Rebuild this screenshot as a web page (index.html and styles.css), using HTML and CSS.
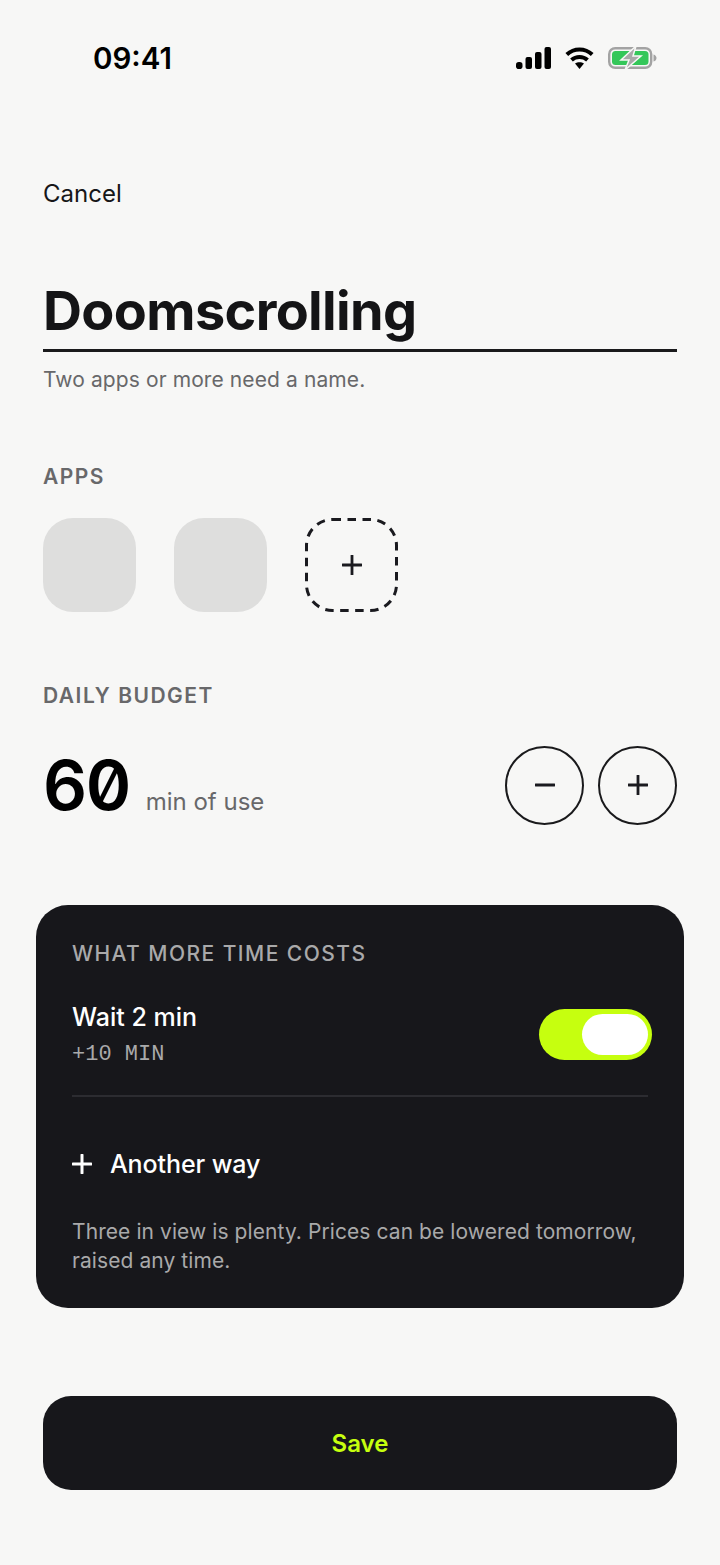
FILE: index.html
```html
<!DOCTYPE html>
<html lang="en">
<head>
<meta charset="utf-8">
<title>Doomscrolling</title>
<link rel="stylesheet" href="styles.css">
</head>
<body>
<div class="screen">
  <header class="status">
    <span class="time">09:41</span>
    <div class="status-icons">
      <svg class="ic-signal" width="35" height="22" viewBox="0 0 35 22"><rect x="0" y="15" width="6.500" height="7" rx="2.800"/><rect x="9.500" y="10" width="6.500" height="12" rx="2"/><rect x="19" y="5" width="6.500" height="17" rx="2"/><rect x="28.500" y="0" width="6.500" height="22" rx="2"/></svg>
      <svg class="ic-wifi" width="29" height="22" viewBox="0 0 28 22"><path d="M1.300 7.500C8.500 .8 19.500 .8 26.700 7.500" fill="none" stroke="#000" stroke-width="4"/><path d="M6 13C10.500 9 17.500 9 22 13" fill="none" stroke="#000" stroke-width="4"/><path d="M9.500 16.500C12 14.800 16 14.800 18.500 16.500L14 22Z" fill="#000"/></svg>
      <svg class="ic-batt" width="49" height="24" viewBox="0 0 49 24"><rect x="1.200" y="2.200" width="42" height="19.600" rx="6" fill="none" stroke="#a3a3a3" stroke-width="2.400"/><rect x="4" y="5" width="36.500" height="14" rx="3.500" fill="#34c759"/><path d="M45.500 8.500c2 .5 3 2 3 3.500s-1 3-3 3.500z" fill="#a3a3a3"/><path d="M28 0L13 14h8l-4 10 16-14h-8z" fill="#a9a9a9" stroke="#f7f7f5" stroke-width="1.500"/></svg>
    </div>
  </header>

  <main class="content">
    <a class="cancel">Cancel</a>
    <h1 class="title">Doomscrolling</h1>
    <p class="hint">Two apps or more need a name.</p>

    <h2 class="label apps-label">APPS</h2>
    <div class="apps">
      <div class="app"></div>
      <div class="app"></div>
      <div class="app-add">
        <svg class="add-border" width="93" height="94" viewBox="0 0 93 94"><rect x="1.500" y="1.500" width="90" height="91" rx="26" fill="none" stroke="#1a1a1f" stroke-width="3" stroke-dasharray="8.500 6.500"/></svg>
        <svg class="plus" width="20" height="20" viewBox="0 0 20 20"><path d="M10 .5v19M.5 10h19" stroke="#1a1a1f" stroke-width="2.800" stroke-linecap="round" fill="none"/></svg>
      </div>
    </div>

    <h2 class="label budget-label">DAILY BUDGET</h2>
    <div class="budget">
      <div class="amount"><span class="num">60</span><span class="unit">min of use</span></div>
      <div class="steppers">
        <button class="step"><svg width="20" height="20" viewBox="0 0 20 20"><path d="M.5 10h19" stroke="#1a1a1f" stroke-width="2.800" stroke-linecap="round" fill="none"/></svg></button>
        <button class="step"><svg width="20" height="20" viewBox="0 0 20 20"><path d="M10 .5v19M.5 10h19" stroke="#1a1a1f" stroke-width="2.800" stroke-linecap="round" fill="none"/></svg></button>
      </div>
    </div>

    <section class="card">
      <h2 class="card-label">WHAT MORE TIME COSTS</h2>
      <div class="cost">
        <div>
          <div class="cost-name">Wait 2 min</div>
          <div class="cost-extra">+10 MIN</div>
        </div>
        <div class="toggle"><div class="knob"></div></div>
      </div>
      <div class="another">
        <svg width="20" height="20" viewBox="0 0 20 20"><path d="M10 1v18M1 10h18" stroke="#fff" stroke-width="3" stroke-linecap="round" fill="none"/></svg>
        <span>Another way</span>
      </div>
      <p class="note">Three in view is plenty. Prices can be lowered tomorrow, raised any time.</p>
    </section>

    <button class="save">Save</button>
  </main>
</div>
</body>
</html>
```
FILE: styles.css
```css
* { box-sizing: border-box; }
html, body { margin: 0; padding: 0; }
body { background: #f7f7f6; font-family: Inter, "Liberation Sans", sans-serif; color: #1a1a1f; }
.screen { width: 720px; height: 1565px; overflow: hidden; }

.status { height: 116px; display: flex; justify-content: space-between; align-items: center; padding: 0 63px 0 93px; }
.time { font-size: 29.500px; font-weight: 600; color: #000; line-height: 36px; }
.status-icons { display: flex; align-items: center; gap: 14px; }
.ic-signal { fill: #000; }

.content { padding: 0 43px; }
.cancel { display: block; margin-top: 62px; font-size: 24px; line-height: 32px; color: #161618; }

.title { margin: 68px 0 0; height: 74px; font-size: 54px; line-height: 65px; font-weight: 700; letter-spacing: -.65px; color: #141416; border-bottom: 3px solid #1a1a1c; }
.hint { margin: 14px 0 0; font-size: 21px; line-height: 28px; color: #68686a; letter-spacing: .1px; }

.label { margin: 0; font-size: 21px; line-height: 26px; font-weight: 600; letter-spacing: 1.500px; color: #68686a; }
.apps-label { margin-top: 70px; }
.apps { display: flex; gap: 38px; margin-top: 28px; }
.app { width: 93px; height: 94px; border-radius: 30px; background: #dededd; }
.app-add { position: relative; width: 93px; height: 94px; display: flex; align-items: center; justify-content: center; }
.add-border { position: absolute; inset: 0; }

.budget-label { margin-top: 71px; }
.budget { display: flex; justify-content: space-between; align-items: center; margin-top: 37px; height: 78px; }
.amount { display: flex; align-items: baseline; gap: 16px; }
.num { font-feature-settings: "zero" 1; font-size: 69px; font-weight: 600; line-height: 78px; letter-spacing: -1.500px; color: #000; }
.unit { font-size: 24px; color: #68686a; }
.steppers { display: flex; gap: 14px; }
.step { width: 79px; height: 79px; border: 2.700px solid #1a1a1c; border-radius: 50%; background: transparent; padding: 0; display: flex; align-items: center; justify-content: center; }

.card { margin: 81px -7px 0; height: 403px; padding: 36px 36px 0; border-radius: 32px; background: #17171b; }
.card-label { margin: 0; font-size: 21px; line-height: 26px; font-weight: 500; letter-spacing: 1.450px; color: #a9a9aa; }
.cost { display: flex; justify-content: space-between; align-items: center; height: 112px; margin: 18px 0 0; border-bottom: 2px solid #2c2c31; padding-bottom: 11px; }
.cost-name { font-size: 25px; line-height: 32px; font-weight: 500; color: #fff; }
.cost-extra { margin-top: 9px; font-family: "Liberation Mono", monospace; font-size: 22px; line-height: 26px; color: #a9a9aa; }
.toggle { width: 113px; height: 51px; margin-right: -4px; padding: 5px 4px; border-radius: 26px; background: #c6ff0f; display: flex; justify-content: flex-end; }
.knob { width: 66px; height: 41px; border-radius: 21px; background: #fff; }
.another { display: flex; align-items: center; gap: 18px; margin-top: 51px; font-size: 25px; line-height: 32px; font-weight: 500; letter-spacing: -.1px; color: #fff; }
.note { margin: 37px 0 0; font-size: 21px; line-height: 29px; color: #a9a9aa; letter-spacing: .08px; }

.save { display: block; width: 100%; height: 94px; margin-top: 88px; border: 0; border-radius: 28px; background: #17171b; color: #c6ff0f; font-family: inherit; font-size: 24px; font-weight: 600; }
```
